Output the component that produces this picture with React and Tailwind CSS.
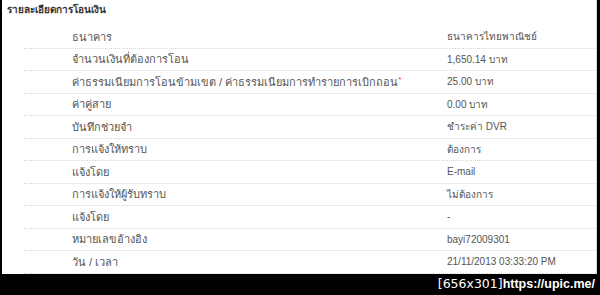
import React from "react";

const rows = [
  { label: "ธนาคาร", value: "ธนาคารไทยพาณิชย์" },
  { label: "จำนวนเงินที่ต้องการโอน", value: "1,650.14 บาท" },
  {
    label: "ค่าธรรมเนียมการโอนข้ามเขต / ค่าธรรมเนียมการทำรายการเบิกถอน",
    value: "25.00 บาท",
    required: true,
  },
  { label: "ค่าคู่สาย", value: "0.00 บาท" },
  { label: "บันทึกช่วยจำ", value: "ชำระค่า DVR" },
  { label: "การแจ้งให้ทราบ", value: "ต้องการ" },
  { label: "แจ้งโดย", value: "E-mail" },
  { label: "การแจ้งให้ผู้รับทราบ", value: "ไม่ต้องการ" },
  { label: "แจ้งโดย", value: "-" },
  { label: "หมายเลขอ้างอิง", value: "bayi72009301" },
  { label: "วัน / เวลา", value: "21/11/2013 03:33:20 PM" },
];

const App = () => {
  return (
    <div className="w-[600px] h-[295px] bg-black flex flex-col font-['Liberation_Sans',Tahoma,sans-serif]">
      <div className="ml-[2px] mr-[3px] h-[274px] bg-white border-r border-[#d8d8d8] flex flex-col">
        <div className="h-[26px] pl-[5px] pt-[2px] text-[10px] font-bold text-[#333]">
          รายละเอียดการโอนเงิน
        </div>

        <div className="ml-[22px] flex flex-col">
          {rows.map((row, i) => (
            <div
              key={i}
              className="h-[22.5px] flex items-center border-b border-dotted border-[#d6d6d6] text-[10px] text-[#555]"
            >
              <div className="w-[423px] pl-[48px] whitespace-nowrap text-[11px]">
                {row.label}
                {row.required && (
                  <span className="text-[#e03030] align-top text-[8px]">*</span>
                )}
              </div>
              <div className="whitespace-nowrap">{row.value}</div>
            </div>
          ))}
        </div>
      </div>

      <div className="flex-1 flex items-center justify-end pr-[5px] text-white text-[12.5px] leading-none">
        <span className="font-['DejaVu_Sans',sans-serif]">[656x301]</span>
        <span className="font-['Liberation_Sans',sans-serif] font-bold">https://upic.me/</span>
      </div>
    </div>
  );
};

export default App;
